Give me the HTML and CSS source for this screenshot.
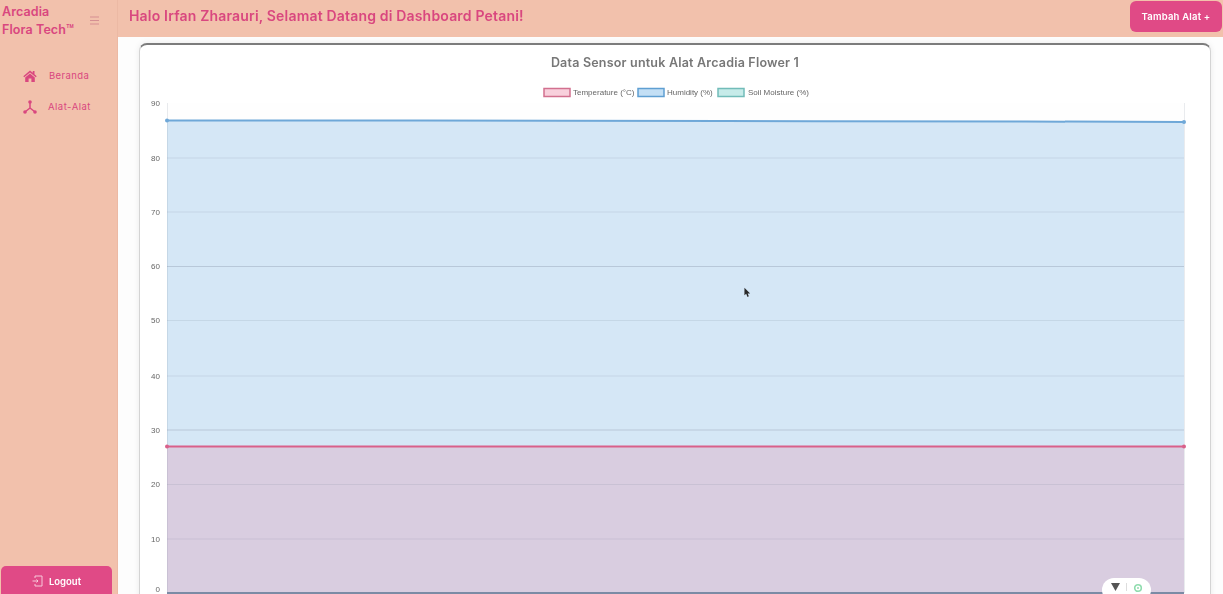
FILE: index.html
```html
<!DOCTYPE html>
<html lang="id">

<head>
    <meta charset="UTF-8">
    <meta name="viewport" content="width=device-width, initial-scale=1.0">
    <title>Dashboard Petani</title>
    <link rel="stylesheet" href="styles.css">
</head>

<body>
    <aside class="sidebar">
        <div class="brand">
            <div class="brand-name">Arcadia<br>Flora Tech™</div>
            <svg class="burger" width="9" height="9" viewBox="0 0 9 9">
                <path d="M0 1h9M0 4.500h9M0 8h9" stroke="#d58f92" stroke-width="1.200" fill="none" />
            </svg>
        </div>

        <ul class="nav">
            <li>
                <svg class="nav-icon" width="14" height="12" viewBox="0 0 14 12">
                    <path d="M7 0.500 0.300 6.200l0.900 1L7 2.400l5.800 4.800 0.900-1L11.500 4.300V1H9.800v1.800z" fill="#d9477f" />
                    <path d="M7 3.500 2.200 7.500V12h3.400V8.600h2.800V12h3.400V7.500z" fill="#d9477f" />
                </svg>
                <a class="nav-home" href="#beranda">Beranda</a>
            </li>
            <li>
                <svg class="nav-icon" width="14" height="14" viewBox="0 0 14 14">
                    <path d="M7 2.500V8M7 8l-4.500 3.500M7 8l4.500 3.500" stroke="#d9477f" stroke-width="1.500" fill="none" />
                    <circle cx="7" cy="2" r="1.800" fill="#d9477f" />
                    <circle cx="2" cy="12" r="1.800" fill="#d9477f" />
                    <circle cx="12" cy="12" r="1.800" fill="#d9477f" />
                </svg>
                <a class="nav-tools" href="#alat">Alat-Alat</a>
            </li>
        </ul>

        <button class="logout" type="button">
            <svg width="11" height="12" viewBox="0 0 11 12">
                <path d="M3 3V1h7v10H3V9M0.500 6H6M4.500 4.500 6 6 4.500 7.500" stroke="#f7c9da" stroke-width="1" fill="none" />
            </svg>
            Logout
        </button>
    </aside>

    <div class="main">
        <header class="topbar">
            <h1>Halo Irfan Zharauri, Selamat Datang di Dashboard Petani!</h1>
            <button class="add-btn" type="button">Tambah Alat +</button>
        </header>

        <section class="content">
            <div class="card">
                <h2>Data Sensor untuk Alat Arcadia Flower 1</h2>

                <!-- viewBox pakai koordinat halaman supaya gampang dicocokkan -->
                <svg class="chart" width="1072" height="514" viewBox="139 80 1072 514">
                    <rect x="167" y="103" width="1017" height="491" fill="#fefefe" />

                    <path d="M167 120.500 L420 120.500 L725 121 L1025 121.500 L1184 122 V593 H167Z" fill="#d5e7f6" />
                    <rect x="167" y="446" width="1017" height="147" fill="#d9cde0" />

                    <g class="grid">
                        <path d="M167 158H1184M167 212H1184M167 320.500H1184M167 376H1184M167 484.500H1184M167 539H1184" />
                        <path class="grid-strong" d="M167 266.500H1184M167 430H1184" />
                        <path d="M167.500 103V593M1184.500 103V593" />
                    </g>

                    <path d="M167 120.500 L420 120.500 L725 121 L1025 121.500 L1184 122" class="line-hum" />
                    <path d="M167 446.500H1184" class="line-temp" />
                    <path d="M167 593H1184" class="line-soil" />

                    <circle cx="167" cy="120.500" r="2" fill="#6fa8d8" />
                    <circle cx="1184" cy="122" r="2" fill="#6fa8d8" />
                    <circle cx="167" cy="446.500" r="2" fill="#d9608a" />
                    <circle cx="1184" cy="446.500" r="2" fill="#d9608a" />

                    <g class="ticks">
                        <text x="160" y="106">90</text>
                        <text x="160" y="161">80</text>
                        <text x="160" y="215">70</text>
                        <text x="160" y="269">60</text>
                        <text x="160" y="323">50</text>
                        <text x="160" y="379">40</text>
                        <text x="160" y="433">30</text>
                        <text x="160" y="487">20</text>
                        <text x="160" y="542">10</text>
                        <text x="160" y="592">0</text>
                    </g>

                    <g class="legend">
                        <rect x="544" y="88.500" width="26" height="8" fill="#f8d0dc" stroke="#d2708f" stroke-width="1.500" />
                        <text x="573" y="95">Temperature (°C)</text>
                        <rect x="638" y="88.500" width="26" height="8" fill="#c3dff5" stroke="#5f9fd2" stroke-width="1.500" />
                        <text x="667" y="95">Humidity (%)</text>
                        <rect x="718" y="88.500" width="26" height="8" fill="#c6ebe9" stroke="#72bcb9" stroke-width="1.500" />
                        <text x="748" y="95">Soil Moisture (%)</text>
                    </g>
                </svg>
            </div>
        </section>
    </div>

    <div class="widget">
        <svg width="9" height="8" viewBox="0 0 9 8">
            <path d="M0 0h9L4.500 8z" fill="#555" />
        </svg>
        <span class="widget-sep"></span>
        <svg width="10" height="10" viewBox="0 0 10 10">
            <circle cx="5" cy="5" r="3.300" fill="none" stroke="#8fdcae" stroke-width="1.600" />
            <circle cx="5" cy="5" r="1" fill="#8fdcae" />
        </svg>
    </div>

    <svg class="cursor" width="7" height="11" viewBox="0 0 8 12">
        <path d="M0.500 0.500V9L2.500 7.500 4 11 5.500 10.300 4.200 7H7z" fill="#2a2a2a" />
    </svg>
</body>

</html>
```

FILE: styles.css
```css
* {
    box-sizing: border-box;
}

html,
body {
    height: 100%;
}

body {
    margin: 0;
    display: flex;
    overflow: hidden;
    background-color: #fdfdfd;
    font-family: "Inter", "Noto Sans", sans-serif;
    filter: blur(0.7px);
}

/* sidebar */
.sidebar {
    width: 118px;
    flex-shrink: 0;
    display: flex;
    flex-direction: column;
    background-color: #f2c1ac;
    border-right: 1px solid #ecb9a4;
    padding-left: 1px;
}

.brand {
    display: flex;
    align-items: center;
    justify-content: space-between;
    padding: 3px 18px 0 1px;
}

.brand-name {
    color: #d9477f;
    font-size: 12.500px;
    font-weight: 600;
    line-height: 18px;
    letter-spacing: 0.1px;
}

.burger {
    margin-top: -2px;
}

.nav {
    list-style-type: none;
    margin: 21px 0 0;
    padding: 0 0 0 22px;
}

.nav li {
    display: flex;
    align-items: center;
    height: 31px;
    gap: 12px;
}

.nav-icon {
    flex-shrink: 0;
}

.nav a {
    color: #d9477f;
    font-size: 9.500px;
    text-decoration: none;
}

.nav .nav-home {
    font-size: 9.500px;
    letter-spacing: 0.4px;
}

.nav .nav-tools {
    margin-left: -1px;
    letter-spacing: 0.5px;
}

.logout {
    display: flex;
    align-items: center;
    justify-content: center;
    gap: 6px;
    width: 111px;
    height: 32px;
    margin-top: auto;
    margin-bottom: -4px;
    padding: 0 0 2px;
    border: none;
    border-radius: 5px;
    background-color: #e04a86;
    color: #fff;
    font-family: inherit;
    font-size: 9.500px;
    font-weight: 600;
}

/* isi kanan */
.main {
    flex: 1;
    min-width: 0;
    display: flex;
    flex-direction: column;
}

.topbar {
    height: 37px;
    flex-shrink: 0;
    display: flex;
    align-items: flex-start;
    justify-content: space-between;
    background-color: #f2c1ac;
    padding: 1px 1px 0 11px;
}

.topbar h1 {
    margin: 6px 0 0;
    color: #d9477f;
    font-size: 14px;
    line-height: 18px;
    font-weight: 600;
    letter-spacing: 0.18px;
}

.add-btn {
    width: 92px;
    height: 31px;
    padding: 0;
    border: none;
    border-radius: 6px;
    background-color: #e04a86;
    color: #fff;
    font-family: inherit;
    font-size: 9.500px;
    font-weight: 600;
    letter-spacing: 0.2px;
}

.content {
    flex: 1;
    padding: 6px 12px 0 21px;
    min-height: 0;
}

.card {
    height: 600px;
    background-color: #fff;
    border: 1px solid #d4d4d4;
    border-top: 2px solid #7c7c7c;
    border-radius: 8px 8px 0 0;
    box-shadow: 0 0 6px rgba(0, 0, 0, 0.08);
}

.card h2 {
    margin: 0;
    height: 35px;
    padding-top: 10px;
    text-align: center;
    color: #777;
    font-size: 12.500px;
    font-weight: 600;
    letter-spacing: 0.2px;
}

/* chart */
.chart {
    display: block;
    margin-left: -1px;
}

.grid path {
    fill: none;
    stroke: rgba(120, 130, 150, 0.16);
    stroke-width: 1;
}

.grid .grid-strong {
    stroke: rgba(120, 130, 150, 0.3);
}

.line-hum,
.line-temp,
.line-soil {
    fill: none;
    stroke-width: 2;
}

.line-hum {
    stroke: #6fa8d8;
}

.line-temp {
    stroke: #d9608a;
}

.line-soil {
    stroke: #7b8ba5;
}

.ticks text {
    font-family: "Liberation Sans", sans-serif;
    font-size: 8px;
    fill: #666;
    text-anchor: end;
}

.legend text {
    font-family: "Liberation Sans", sans-serif;
    font-size: 8px;
    fill: #666;
}

/* widget kecil di pojok */
.widget {
    position: absolute;
    left: 1102px;
    top: 578px;
    width: 49px;
    height: 24px;
    display: flex;
    align-items: flex-start;
    justify-content: center;
    gap: 6px;
    padding-top: 5px;
    border-radius: 12px;
    background-color: #fff;
}

.widget-sep {
    width: 1px;
    height: 8px;
    background-color: #ddd;
}

.cursor {
    position: absolute;
    left: 744px;
    top: 287px;
}
```
